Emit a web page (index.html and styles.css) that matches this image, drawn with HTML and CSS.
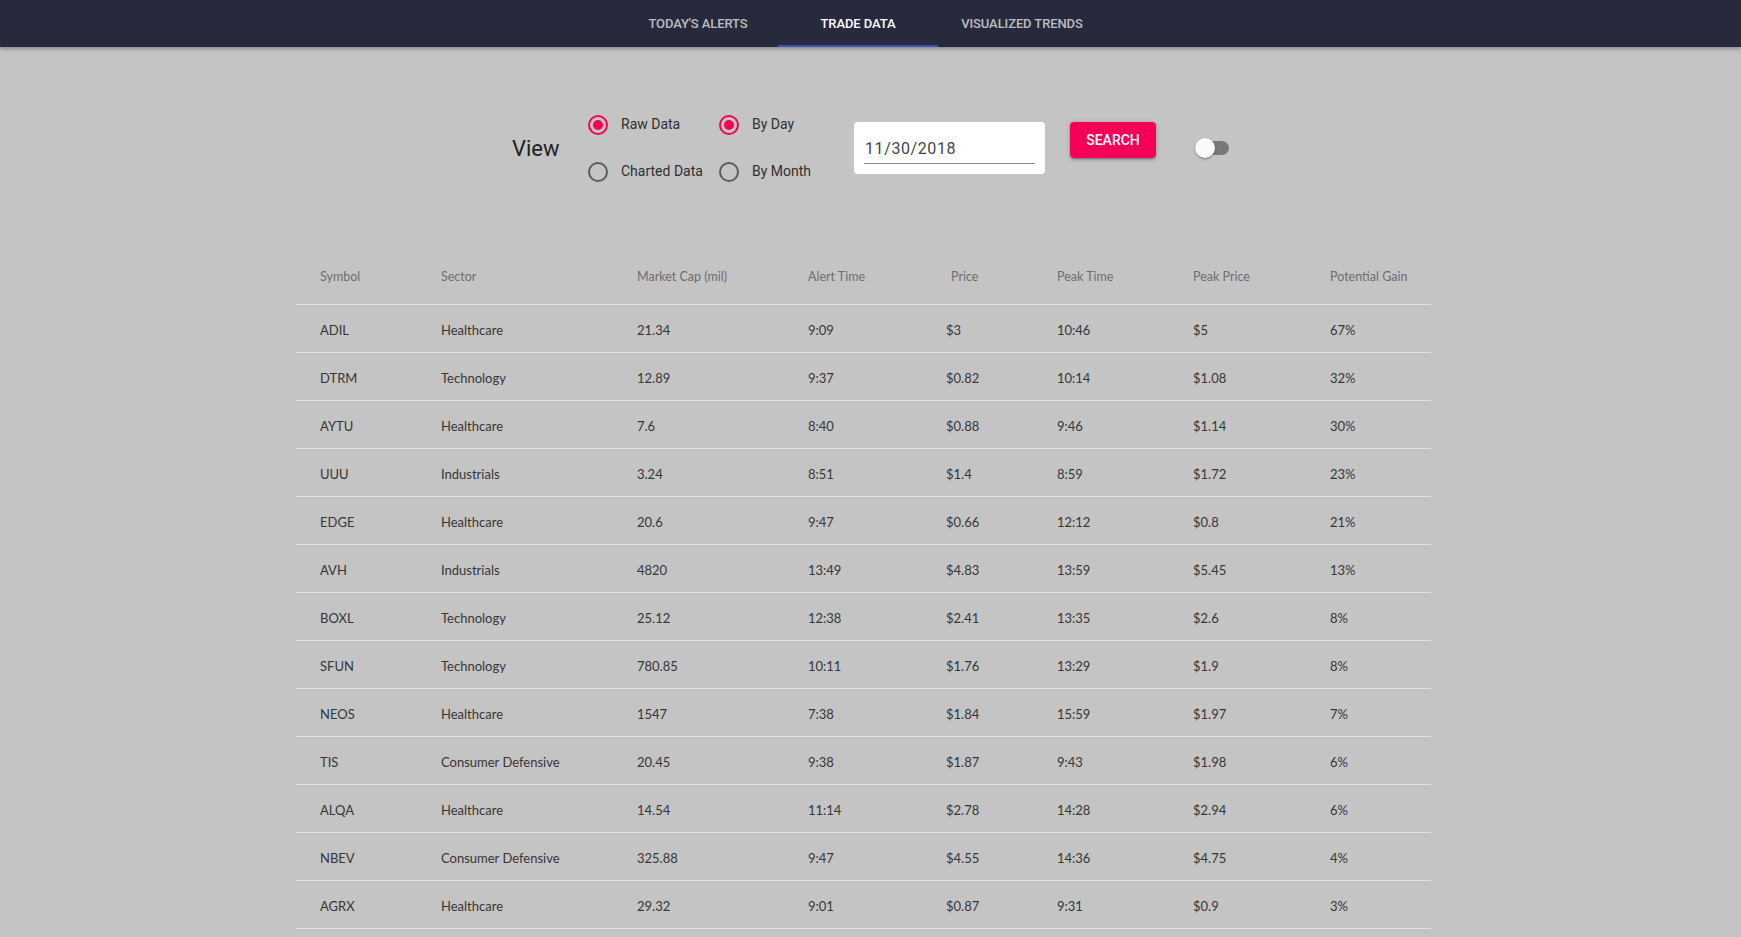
FILE: index.html
```html
<!DOCTYPE html>
<html>
<head>
<meta charset="utf-8">
<title>Trade Data</title>
<link rel="stylesheet" href="styles.css">
</head>
<body>
<header class="appbar">
  <nav class="tabs">
    <a class="tab">Today's Alerts</a>
    <a class="tab active">Trade Data</a>
    <a class="tab tab-wide">Visualized Trends</a>
  </nav>
</header>

<main class="page">
  <section class="controls">
    <div class="view-label">View</div>
    <div class="radio-grid">
      <label class="radio-item"><span class="radio checked"></span><span class="radio-text">Raw Data</span></label>
      <label class="radio-item"><span class="radio checked"></span><span class="radio-text">By Day</span></label>
      <label class="radio-item"><span class="radio"></span><span class="radio-text">Charted Data</span></label>
      <label class="radio-item"><span class="radio"></span><span class="radio-text">By Month</span></label>
    </div>
    <div class="date-box">
      <div class="date-input">11/30/2018</div>
    </div>
    <button class="search-btn">Search</button>
    <div class="switch">
      <span class="switch-track"></span>
      <span class="switch-thumb"></span>
    </div>
  </section>

  <div class="table-wrap">
  <section class="table">
    <div class="row head">
      <div class="cell">Symbol</div>
      <div class="cell">Sector</div>
      <div class="cell">Market Cap (mil)</div>
      <div class="cell">Alert Time</div>
      <div class="cell price-head">Price</div>
      <div class="cell">Peak Time</div>
      <div class="cell">Peak Price</div>
      <div class="cell">Potential Gain</div>
    </div>
    <div class="row"><div class="cell">ADIL</div><div class="cell">Healthcare</div><div class="cell">21.34</div><div class="cell">9:09</div><div class="cell">$3</div><div class="cell">10:46</div><div class="cell">$5</div><div class="cell">67%</div></div>
    <div class="row"><div class="cell">DTRM</div><div class="cell">Technology</div><div class="cell">12.89</div><div class="cell">9:37</div><div class="cell">$0.82</div><div class="cell">10:14</div><div class="cell">$1.08</div><div class="cell">32%</div></div>
    <div class="row"><div class="cell">AYTU</div><div class="cell">Healthcare</div><div class="cell">7.6</div><div class="cell">8:40</div><div class="cell">$0.88</div><div class="cell">9:46</div><div class="cell">$1.14</div><div class="cell">30%</div></div>
    <div class="row"><div class="cell">UUU</div><div class="cell">Industrials</div><div class="cell">3.24</div><div class="cell">8:51</div><div class="cell">$1.4</div><div class="cell">8:59</div><div class="cell">$1.72</div><div class="cell">23%</div></div>
    <div class="row"><div class="cell">EDGE</div><div class="cell">Healthcare</div><div class="cell">20.6</div><div class="cell">9:47</div><div class="cell">$0.66</div><div class="cell">12:12</div><div class="cell">$0.8</div><div class="cell">21%</div></div>
    <div class="row"><div class="cell">AVH</div><div class="cell">Industrials</div><div class="cell">4820</div><div class="cell">13:49</div><div class="cell">$4.83</div><div class="cell">13:59</div><div class="cell">$5.45</div><div class="cell">13%</div></div>
    <div class="row"><div class="cell">BOXL</div><div class="cell">Technology</div><div class="cell">25.12</div><div class="cell">12:38</div><div class="cell">$2.41</div><div class="cell">13:35</div><div class="cell">$2.6</div><div class="cell">8%</div></div>
    <div class="row"><div class="cell">SFUN</div><div class="cell">Technology</div><div class="cell">780.85</div><div class="cell">10:11</div><div class="cell">$1.76</div><div class="cell">13:29</div><div class="cell">$1.9</div><div class="cell">8%</div></div>
    <div class="row"><div class="cell">NEOS</div><div class="cell">Healthcare</div><div class="cell">1547</div><div class="cell">7:38</div><div class="cell">$1.84</div><div class="cell">15:59</div><div class="cell">$1.97</div><div class="cell">7%</div></div>
    <div class="row"><div class="cell">TIS</div><div class="cell">Consumer Defensive</div><div class="cell">20.45</div><div class="cell">9:38</div><div class="cell">$1.87</div><div class="cell">9:43</div><div class="cell">$1.98</div><div class="cell">6%</div></div>
    <div class="row"><div class="cell">ALQA</div><div class="cell">Healthcare</div><div class="cell">14.54</div><div class="cell">11:14</div><div class="cell">$2.78</div><div class="cell">14:28</div><div class="cell">$2.94</div><div class="cell">6%</div></div>
    <div class="row"><div class="cell">NBEV</div><div class="cell">Consumer Defensive</div><div class="cell">325.88</div><div class="cell">9:47</div><div class="cell">$4.55</div><div class="cell">14:36</div><div class="cell">$4.75</div><div class="cell">4%</div></div>
    <div class="row"><div class="cell">AGRX</div><div class="cell">Healthcare</div><div class="cell">29.32</div><div class="cell">9:01</div><div class="cell">$0.87</div><div class="cell">9:31</div><div class="cell">$0.9</div><div class="cell">3%</div></div>
  </section>
  </div>
</main>
</body>
</html>
```

FILE: styles.css
```css
* { box-sizing: border-box; }

html, body {
  margin: 0;
  padding: 0;
  background: #c4c4c4;
  font-family: Roboto, "Liberation Sans", sans-serif;
}

.appbar {
  height: 47px;
  background: #262a3c;
  box-shadow: 0 2px 4px rgba(0, 0, 0, 0.3);
  position: relative;
  z-index: 1;
}

.tabs {
  display: flex;
  justify-content: center;
  height: 100%;
  padding-right: 25px;
}

.tab {
  display: flex;
  align-items: center;
  justify-content: center;
  width: 160px;
  height: 100%;
  font-size: 13px;
  font-weight: 500;
  text-transform: uppercase;
  color: rgba(255, 255, 255, 0.7);
  letter-spacing: -0.1px;
  cursor: pointer;
  border-bottom: 2px solid transparent;
  padding-top: 2px;
}

.tab.tab-wide {
  padding-left: 8px;
}

.tab.active {
  color: #ffffff;
  border-bottom-color: #3f51b5;
}

/* Controls */
.controls {
  width: 717px;
  height: 96px;
  margin: 53px auto 0;
  display: flex;
  align-items: center;
}

.view-label {
  width: 76px;
  font-size: 22px;
  color: #222;
  padding-top: 1px;
}

.radio-grid {
  width: 266px;
  display: grid;
  grid-template-columns: 131px 135px;
  grid-auto-rows: 47px;
}

.radio-item {
  display: flex;
  align-items: center;
  gap: 13px;
}

.radio {
  width: 20px;
  height: 20px;
  border-radius: 50%;
  border: 2px solid #5c5c5c;
  display: flex;
  align-items: center;
  justify-content: center;
  flex: none;
}

.radio.checked {
  border-color: #f50057;
}

.radio.checked::after {
  content: "";
  width: 10px;
  height: 10px;
  border-radius: 50%;
  background: #f50057;
}

.radio-text {
  font-size: 14px;
  color: #303030;
  padding-bottom: 1px;
}

.date-box {
  width: 191px;
  height: 52px;
  background: #ffffff;
  border-radius: 4px;
  padding: 10px 10px 0 10px;
}

.date-input {
  height: 32px;
  border-bottom: 1px solid #8a8a8a;
  font-size: 16px;
  letter-spacing: 0.6px;
  color: #444;
  padding: 7px 0 0 1px;
}

.search-btn {
  width: 86px;
  height: 36px;
  margin-left: 25px;
  margin-bottom: 16px;
  border: none;
  border-radius: 4px;
  background: #f50057;
  color: #fff;
  font-family: Roboto, "Liberation Sans", sans-serif;
  font-size: 14px;
  font-weight: 500;
  text-transform: uppercase;
  box-shadow: 0 1px 5px rgba(0,0,0,0.2), 0 2px 2px rgba(0,0,0,0.14), 0 3px 1px -2px rgba(0,0,0,0.12);
  padding: 0;
}

.switch {
  position: relative;
  width: 34px;
  height: 20px;
  margin-left: 39px;
  display: flex;
  align-items: center;
}

.switch-track {
  width: 34px;
  height: 14px;
  border-radius: 7px;
  background: #797979;
}

.switch-thumb {
  position: absolute;
  left: 0;
  top: 0;
  width: 20px;
  height: 20px;
  border-radius: 50%;
  background: #fafafa;
  box-shadow: 0 1px 3px rgba(0,0,0,0.2), 0 1px 1px rgba(0,0,0,0.14), 0 2px 1px -1px rgba(0,0,0,0.12);
}

/* Table */
.table-wrap {
  padding-right: 14px;
  padding-top: 53px;
}

.table {
  width: 1135px;
  margin: 0 auto;
  font-family: Lato, "Open Sans", sans-serif;
  font-size: 13px;
}

.row {
  display: grid;
  grid-template-columns: 121px 196px 171px 138px 111px 136px 137px 125px;
  height: 48px;
  align-items: center;
  border-bottom: 1px solid #e2e2e2;
  color: #363636;
  padding-top: 2px;
}

.row.head {
  height: 56px;
  color: #6e6e6e;
  font-size: 12.5px;
  padding-top: 0;
  padding-bottom: 1px;
}

.cell {
  padding-left: 24px;
  white-space: nowrap;
}

.cell.price-head {
  padding-left: 29px;
}
```
